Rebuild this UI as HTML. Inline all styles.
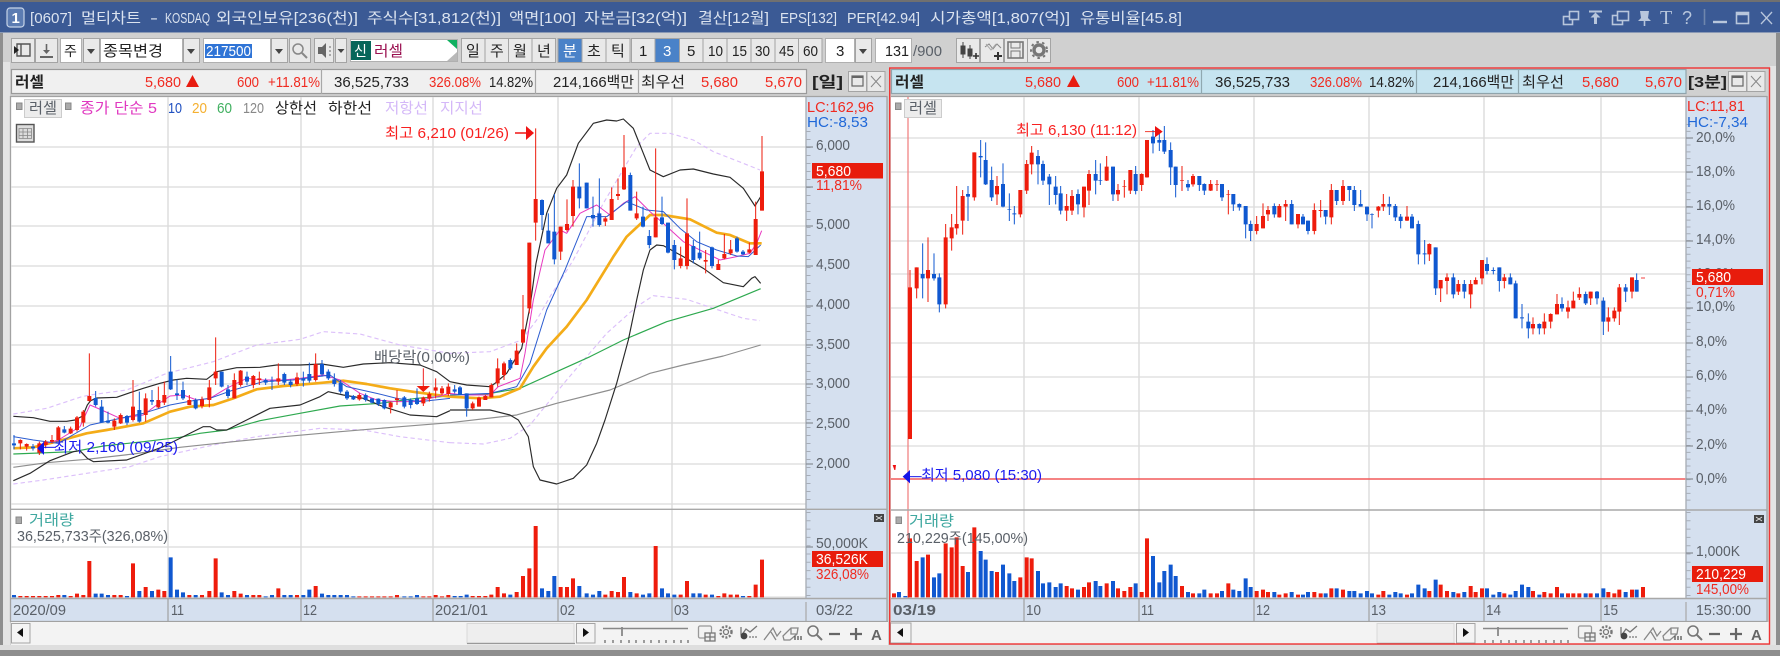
<!DOCTYPE html>
<html lang="ko"><head><meta charset="utf-8"><title>멀티차트</title>
<style>
html,body{margin:0;padding:0;background:#d0d0d0;width:1780px;height:656px;overflow:hidden}
svg{display:block}
text{font-family:"Liberation Sans","Noto Sans CJK KR",sans-serif;font-size:15px;fill:#333}
.t text{fill:#dbe3ef;font-size:15px}
.r{fill:#f02a20}
.a{fill:#5a6068}
.w{fill:#fff}
.d{fill:#222}
.n{fill:#222}
.b{fill:#e9e9e9;stroke:#a4a4a4;stroke-width:1}
.wh{fill:#fff;stroke:#b0b0b0;stroke-width:1}
</style></head><body>
<svg xmlns="http://www.w3.org/2000/svg" width="1780" height="656" viewBox="0 0 1780 656">
<defs>
<g id="tools" fill="none" stroke="#777" stroke-width="1.3">
<rect x="698.5" y="626" width="13" height="12" rx="1.5" stroke="#999"/><rect x="705" y="633" width="10" height="8" fill="#eee"/><path d="M710 633v8M705 637h10"/>
<circle cx="726" cy="632" r="5.5" stroke-width="2.4" stroke-dasharray="2 1.6"/><circle cx="726" cy="632" r="2.5"/>
<path d="M741 636l5-7 4 3 7-6M741 627v8"/><circle cx="744" cy="636" r="3.4" fill="#444" stroke="none"/><path d="M749 637h9" stroke-dasharray="2 1"/>
<path d="M764 640l9-12 4 8 4-5M771 632l5 8" stroke="#888"/>
<path d="M783 636l8-8h7l-1 6-7 6h-6zM791 628v6h6" stroke="#888"/><path d="M795 640v-4M798 640v-4M801 640v-4" stroke="#555"/>
<circle cx="813" cy="631" r="5" stroke-width="1.6"/><path d="M817 635l5 5" stroke-width="2"/>
<path d="M829 634h11M850 634h12M856 628v12" stroke="#666" stroke-width="2.2"/>
</g>
</defs>
<rect width="1780" height="656" fill="#d0d0d0"/>
<!-- window frame -->
<rect x="0" y="0" width="1780" height="3" fill="#707070"/>
<rect x="0" y="32" width="3" height="624" fill="#8e8e8e"/>
<rect x="3" y="62" width="7" height="590" fill="#e4e4e4"/>
<rect x="1776" y="32" width="4" height="624" fill="#8e8e8e"/>
<rect x="1770" y="66" width="6" height="586" fill="#e4e4e4"/>
<rect x="0" y="645" width="1780" height="6" fill="#dedede"/>
<rect x="0" y="650" width="1780" height="6" fill="#8e8e8e"/>
<!-- title bar -->
<rect x="0" y="2" width="1780" height="30" fill="#3b5a95"/>
<rect x="7" y="8" width="17" height="19" rx="3" fill="#5c7cb2" stroke="#c6d4e8" stroke-width="1.2"/>
<text x="11.5" y="23" fill="#fff" style="fill:#fff;font-weight:bold;font-size:15px">1</text>
<g class="t">
<text x="30" y="23" textLength="42" lengthAdjust="spacingAndGlyphs">[0607]</text>
<text x="81" y="23" textLength="60" lengthAdjust="spacingAndGlyphs">멀티차트</text>
<text x="150" y="23" textLength="8" lengthAdjust="spacingAndGlyphs">-</text>
<text x="165" y="23" textLength="45" lengthAdjust="spacingAndGlyphs">KOSDAQ</text>
<text x="216" y="23" textLength="142" lengthAdjust="spacingAndGlyphs">외국인보유[236(천)]</text>
<text x="367" y="23" textLength="134" lengthAdjust="spacingAndGlyphs">주식수[31,812(천)]</text>
<text x="509" y="23" textLength="67" lengthAdjust="spacingAndGlyphs">액면[100]</text>
<text x="584" y="23" textLength="103" lengthAdjust="spacingAndGlyphs">자본금[32(억)]</text>
<text x="698" y="23" textLength="71" lengthAdjust="spacingAndGlyphs">결산[12월]</text>
<text x="780" y="23" textLength="57" lengthAdjust="spacingAndGlyphs">EPS[132]</text>
<text x="847" y="23" textLength="73" lengthAdjust="spacingAndGlyphs">PER[42.94]</text>
<text x="930" y="23" textLength="140" lengthAdjust="spacingAndGlyphs">시가총액[1,807(억)]</text>
<text x="1080" y="23" textLength="102" lengthAdjust="spacingAndGlyphs">유통비율[45.8]</text>
</g>
<g fill="none" stroke="#b8c6dc" stroke-width="1.6">
<rect x="1563.5" y="16.5" width="9" height="8"/><rect x="1569.5" y="11.5" width="9" height="8" fill="#3b5a95"/>
<path d="M1589 11.5h13" stroke-width="2"/><path d="M1595.5 24v-8" stroke-width="3"/><path d="M1590.5 17.5l5-5 5 5z" fill="#b8c6dc" stroke="none"/>
<rect x="1612.5" y="15.5" width="10" height="9"/><rect x="1617.5" y="11.5" width="11" height="9" fill="#3b5a95"/>
<path d="M1640 11h9l-1 7 3 3h-13l3-3z" fill="#b8c6dc" stroke="none"/><path d="M1644.5 21v5"/>
<path d="M1704.5 9v16" stroke="#6f86ad"/>
<path d="M1713 22h14" stroke-width="2.4"/>
<rect x="1736.5" y="12.5" width="12" height="11"/><path d="M1736 14h13" stroke-width="2.5"/>
<path d="M1761 12l11 12M1772 12l-11 12" stroke-width="1.3"/>
</g>
<text x="1660" y="24" style="font-family:'Liberation Serif',serif;font-size:20px;fill:#b8c6dc">T</text>
<text x="1682" y="24" style="font-size:18px;fill:#b8c6dc">?</text>

<!-- toolbar -->
<rect x="0" y="32" width="1780" height="1" fill="#8a99b5"/>
<g>
<rect class="b" x="11.5" y="38.5" width="23" height="24"/><rect class="b" x="35.5" y="38.5" width="22" height="24"/>
<path d="M17 44h13v12H17zM21 44v12" fill="none" stroke="#555" stroke-width="1.4"/><path d="M14 46l5 4-5 4z" fill="#222"/>
<path d="M46.5 44v8" stroke="#666" stroke-width="1.6"/><path d="M43 50h7l-3.5 4z" fill="#666"/><path d="M40 57h13" stroke="#666" stroke-width="2"/>
<rect class="wh" x="60.5" y="38.5" width="21" height="24"/><text x="64" y="56" class="d" style="font-size:14px">주</text>
<rect class="b" x="83.5" y="38.5" width="16" height="24"/><path d="M87 49h8l-4 5z" fill="#444"/>
<rect class="wh" x="100.5" y="38.5" width="82" height="24"/><text x="103" y="56" class="d" textLength="60" lengthAdjust="spacingAndGlyphs">종목변경</text>
<rect class="b" x="183.5" y="38.5" width="16" height="24"/><path d="M187 49h8l-4 5z" fill="#444"/>
<rect class="wh" x="203.5" y="38.5" width="67" height="24"/><rect x="205" y="44" width="47" height="14" fill="#2f74d6"/><text x="206" y="56" class="w" textLength="45" lengthAdjust="spacingAndGlyphs">217500</text>
<rect class="b" x="271.5" y="38.5" width="16" height="24"/><path d="M275 49h8l-4 5z" fill="#444"/>
<rect class="b" x="289.5" y="38.5" width="21" height="24"/><circle cx="298" cy="49" r="5" fill="none" stroke="#888" stroke-width="1.5"/><path d="M302 53l5 5" stroke="#888" stroke-width="2"/>
<rect class="b" x="314.5" y="38.5" width="19" height="24"/><path d="M318 47h4l4-4v15l-4-4h-4z" fill="#666"/><path d="M329 47h2M329 51h2M329 55h2" stroke="#666"/>
<rect class="b" x="335.5" y="38.5" width="11" height="24"/><path d="M337.5 49h7l-3.5 4z" fill="#444"/>
<rect class="wh" x="350.5" y="39.5" width="107" height="22"/><rect x="351" y="41" width="20" height="19" fill="#07665a"/><text x="354" y="56" class="w" style="font-size:14px">신</text>
<text x="374" y="56" style="fill:#9a1050" textLength="29" lengthAdjust="spacingAndGlyphs">러셀</text>
<path d="M447 40h10v9z" fill="#10b060"/><path d="M457 52v9h-10z" fill="#b8b8b8"/>
</g>
<g style="font-size:14px">
<rect class="b" x="461.5" y="38.5" width="23.5" height="24"/><rect class="b" x="485" y="38.5" width="23.5" height="24"/><rect class="b" x="508.5" y="38.5" width="23.5" height="24"/><rect class="b" x="532" y="38.5" width="23.5" height="24"/>
<rect x="558" y="38.5" width="24" height="24" fill="#4a82c8" stroke="#a4a4a4"/><rect class="b" x="582" y="38.5" width="24" height="24"/><rect class="b" x="606" y="38.5" width="24" height="24"/>
<rect class="b" x="631.5" y="38.5" width="23.5" height="24"/><rect x="655" y="38.5" width="24.5" height="24" fill="#4a82c8" stroke="#a4a4a4"/><rect class="b" x="679.5" y="38.5" width="23.5" height="24"/><rect class="b" x="703" y="38.5" width="24" height="24"/><rect class="b" x="727" y="38.5" width="24" height="24"/><rect class="b" x="751" y="38.5" width="24" height="24"/><rect class="b" x="775" y="38.5" width="23.5" height="24"/><rect class="b" x="798.5" y="38.5" width="23.5" height="24"/>
<text x="466" y="56" class="d" textLength="14">일</text><text x="490" y="56" class="d" textLength="14">주</text><text x="513" y="56" class="d" textLength="14">월</text><text x="537" y="56" class="d" textLength="14">년</text>
<text x="563" y="56" class="w" textLength="14">분</text><text x="587" y="56" class="d" textLength="14">초</text><text x="611" y="56" class="d" textLength="14">틱</text>
<text x="639" y="56" class="d">1</text><text x="663" y="56" class="w">3</text><text x="687" y="56" class="d">5</text>
<text x="708" y="56" class="d" textLength="15" lengthAdjust="spacingAndGlyphs">10</text><text x="732" y="56" class="d" textLength="15" lengthAdjust="spacingAndGlyphs">15</text><text x="755" y="56" class="d" textLength="15" lengthAdjust="spacingAndGlyphs">30</text><text x="779" y="56" class="d" textLength="15" lengthAdjust="spacingAndGlyphs">45</text><text x="803" y="56" class="d" textLength="15" lengthAdjust="spacingAndGlyphs">60</text>
<rect class="wh" x="825.5" y="38.5" width="29" height="24"/><text x="836" y="56" class="d">3</text>
<rect class="b" x="855.5" y="38.5" width="16" height="24"/><path d="M859 49h8l-4 5z" fill="#444"/>
<rect class="wh" x="875.5" y="38.5" width="36" height="24"/><text x="885" y="56" class="d" textLength="24" lengthAdjust="spacingAndGlyphs">131</text>
<text x="913" y="56" class="a" textLength="29" lengthAdjust="spacingAndGlyphs">/900</text>
<rect class="b" x="956.5" y="38.5" width="23" height="24"/><rect class="b" x="980.5" y="38.5" width="23" height="24"/><rect class="b" x="1004.5" y="38.5" width="23" height="24"/><rect class="b" x="1027.5" y="38.5" width="23" height="24"/>
<path d="M961 46h4v8h-4zM968 49h4v7h-4zM963 42v16M970 45v14" fill="#444" stroke="#444"/><path d="M973 56h6M976 53v6" stroke="#333" stroke-width="1.6"/>
<path d="M985 47l4-3 4 5 4-5 4 4" fill="none" stroke="#888"/><path d="M986 44l5 6 5-6" fill="none" stroke="#aaa"/><path d="M994 56h8M998 52v8" stroke="#333" stroke-width="2"/>
<rect x="1008" y="42" width="15" height="16" fill="none" stroke="#777" stroke-width="1.6"/><rect x="1011" y="42" width="9" height="6" fill="none" stroke="#777"/><rect x="1011" y="51" width="9" height="7" fill="none" stroke="#777"/>
<circle cx="1039" cy="50" r="5" fill="none" stroke="#777" stroke-width="3.4"/><circle cx="1039" cy="50" r="8" fill="none" stroke="#777" stroke-width="2" stroke-dasharray="2.5 3.3"/>
</g>

<!-- info bars -->
<rect x="11.5" y="69.5" width="795" height="24" fill="#f0f0f0" stroke="#9a9a9a" stroke-width="1.2"/>
<path d="M321.5 69v25M535.5 69v25M638.5 69v25" stroke="#a8a8a8" stroke-width="1.2"/>
<text x="15" y="87" class="d" style="font-weight:bold" textLength="29" lengthAdjust="spacingAndGlyphs">러셀</text>
<g>
<text x="145" y="87" class="r" textLength="36" lengthAdjust="spacingAndGlyphs">5,680</text><path d="M186 87l6.5-12 6.5 12z" fill="#e81c10"/>
<text x="237" y="87" class="r" textLength="22" lengthAdjust="spacingAndGlyphs">600</text><text x="268" y="87" class="r" textLength="52" lengthAdjust="spacingAndGlyphs">+11.81%</text>
<text x="334" y="87" class="n" textLength="75" lengthAdjust="spacingAndGlyphs">36,525,733</text>
<text x="429" y="87" class="r" textLength="52" lengthAdjust="spacingAndGlyphs">326.08%</text>
<text x="489" y="87" class="n" textLength="44" lengthAdjust="spacingAndGlyphs">14.82%</text>
<text x="553" y="87" class="n" textLength="81" lengthAdjust="spacingAndGlyphs">214,166백만</text>
<text x="641" y="87" class="n" textLength="44" lengthAdjust="spacingAndGlyphs">최우선</text>
<text x="701" y="87" class="r" textLength="37" lengthAdjust="spacingAndGlyphs">5,680</text>
<text x="765" y="87" class="r" textLength="37" lengthAdjust="spacingAndGlyphs">5,670</text>
</g>
<text x="812" y="87" class="d" style="font-weight:bold" textLength="31" lengthAdjust="spacingAndGlyphs">[일]</text>
<rect class="b" x="848.5" y="71.5" width="18" height="20"/><rect class="b" x="867" y="71.5" width="18" height="20"/>
<rect x="852" y="76" width="11" height="10" fill="none" stroke="#666" stroke-width="1.2"/><path d="M852 77h11" stroke="#666" stroke-width="2"/><path d="M871 76l10 11M881 76l-10 11" stroke="#888"/>

<rect x="891.5" y="69.5" width="794.5" height="24" fill="#c6e4f0" stroke="#90a4ac" stroke-width="1.2"/>
<path d="M1416.5 69v25M1518.5 69v25M1201.5 69v25" stroke="#90a8b0" stroke-width="1.2"/>
<text x="895" y="87" class="d" style="font-weight:bold" textLength="29" lengthAdjust="spacingAndGlyphs">러셀</text>
<text x="1025" y="87" class="r" textLength="36" lengthAdjust="spacingAndGlyphs">5,680</text><path d="M1067 87l6.5-12 6.5 12z" fill="#e81c10"/>
<text x="1117" y="87" class="r" textLength="22" lengthAdjust="spacingAndGlyphs">600</text><text x="1147" y="87" class="r" textLength="52" lengthAdjust="spacingAndGlyphs">+11.81%</text>
<text x="1215" y="87" class="n" textLength="75" lengthAdjust="spacingAndGlyphs">36,525,733</text>
<text x="1310" y="87" class="r" textLength="52" lengthAdjust="spacingAndGlyphs">326.08%</text>
<text x="1369" y="87" class="n" textLength="45" lengthAdjust="spacingAndGlyphs">14.82%</text>
<text x="1433" y="87" class="n" textLength="81" lengthAdjust="spacingAndGlyphs">214,166백만</text>
<text x="1522" y="87" class="n" textLength="42" lengthAdjust="spacingAndGlyphs">최우선</text>
<text x="1582" y="87" class="r" textLength="37" lengthAdjust="spacingAndGlyphs">5,680</text>
<text x="1645" y="87" class="r" textLength="37" lengthAdjust="spacingAndGlyphs">5,670</text>
<text x="1688" y="87" class="d" style="font-weight:bold" textLength="39" lengthAdjust="spacingAndGlyphs">[3분]</text>
<rect class="b" x="1728.5" y="71.5" width="18" height="20"/><rect class="b" x="1747" y="71.5" width="18" height="20"/>
<rect x="1732" y="76" width="11" height="10" fill="none" stroke="#666" stroke-width="1.2"/><path d="M1732 77h11" stroke="#666" stroke-width="2"/><path d="M1751 76l10 11M1761 76l-10 11" stroke="#888"/>

<!-- LEFT CHART -->
<rect x="11" y="97" width="795" height="501" fill="#fff"/>
<rect x="806" y="97" width="81" height="501" fill="#d5e0ef"/>
<rect x="11" y="598.5" width="876" height="22.5" fill="#d5e0ef"/>
<path d="M10.5 96v526M10.5 96.5H887.500M887 96v526M10 621.500H888" fill="none" stroke="#a2a2a2" stroke-width="1.3"/>
<path d="M11 147H806M11 187H806M11 226H806M11 266H806M11 306H806M11 345H806M11 384H806M11 423H806M11 464H806M11 504H806M11 547H806" stroke="#e0e0e0" stroke-width="1.4"/>
<path d="M168 97V598M301 97V598M433 97V598M558 97V598M672 97V598" stroke="#dcdcdc" stroke-width="1.4"/>
<path d="M11 597H806" stroke="#d8d8d8"/>
<path d="M11 509.300H887" stroke="#a8a8a8" stroke-width="1.4"/>
<path d="M11 598.500H887" stroke="#a8a8a8" stroke-width="1.4"/>
<path d="M806 97V598" stroke="#aab0b8" stroke-width="1.4"/>
<path d="M168 599V621M301 599V621M433 599V621M558 599V621M672 599V621" stroke="#a0a0a0" stroke-width="1.2"/>
<path d="M806 602V621" stroke="#a8a8a8" stroke-width="1.2"/>
<path d="M808.500 131V505" stroke="#a6adb8" stroke-width="4" stroke-dasharray="1 7"/>
<path d="M808.500 512V596" stroke="#a6adb8" stroke-width="4" stroke-dasharray="1 7.300"/>
<path d="M806 147h7M806 226h7M806 266h7M806 306h7M806 345h7M806 384h7M806 423h7M806 464h7M806 547h7M806 187h7" stroke="#8a8f98" stroke-width="1.2"/>
<text x="816" y="150" class="a" textLength="34" lengthAdjust="spacingAndGlyphs">6,000</text>
<text x="816" y="229" class="a" textLength="34" lengthAdjust="spacingAndGlyphs">5,000</text>
<text x="816" y="269" class="a" textLength="34" lengthAdjust="spacingAndGlyphs">4,500</text>
<text x="816" y="309" class="a" textLength="34" lengthAdjust="spacingAndGlyphs">4,000</text>
<text x="816" y="349" class="a" textLength="34" lengthAdjust="spacingAndGlyphs">3,500</text>
<text x="816" y="388" class="a" textLength="34" lengthAdjust="spacingAndGlyphs">3,000</text>
<text x="816" y="428" class="a" textLength="34" lengthAdjust="spacingAndGlyphs">2,500</text>
<text x="816" y="468" class="a" textLength="34" lengthAdjust="spacingAndGlyphs">2,000</text>
<text x="807" y="112" class="r" textLength="67" lengthAdjust="spacingAndGlyphs">LC:162,96</text>
<text x="807" y="127" style="fill:#2068d8" textLength="61" lengthAdjust="spacingAndGlyphs">HC:-8,53</text>
<rect x="812" y="163" width="71" height="15.500" fill="#e81c0c"/>
<text x="816" y="176" class="w" textLength="35" lengthAdjust="spacingAndGlyphs">5,680</text>
<text x="816" y="190" class="r" textLength="46" lengthAdjust="spacingAndGlyphs">11,81%</text>
<rect x="874" y="514" width="10" height="8" fill="#444"/><path d="M876 516l6 4M882 516l-6 4" stroke="#ddd"/>
<text x="816" y="548" class="a" textLength="52" lengthAdjust="spacingAndGlyphs">50,000K</text>
<rect x="812" y="551" width="71" height="16" fill="#e81c0c"/>
<text x="816" y="564" class="w" textLength="52" lengthAdjust="spacingAndGlyphs">36,526K</text>
<text x="816" y="579" class="r" textLength="53" lengthAdjust="spacingAndGlyphs">326,08%</text>

<!-- legend -->
<rect x="16.500" y="103" width="5.500" height="6.500" fill="#aaa" stroke="#888"/>
<rect x="24.500" y="99.500" width="37" height="18" fill="#ececec" stroke="#ccc"/>
<text x="29" y="113" class="a" textLength="28" lengthAdjust="spacingAndGlyphs">러셀</text>
<rect x="65.500" y="103" width="5.500" height="6.500" fill="#aaa" stroke="#888"/>
<text x="80" y="113" style="fill:#e038c0" textLength="77" lengthAdjust="spacingAndGlyphs">종가 단순 5</text>
<text x="168" y="113" style="fill:#2050c0" textLength="14" lengthAdjust="spacingAndGlyphs">10</text>
<text x="192" y="113" style="fill:#f5b030" textLength="15" lengthAdjust="spacingAndGlyphs">20</text>
<text x="217" y="113" style="fill:#40b060" textLength="15" lengthAdjust="spacingAndGlyphs">60</text>
<text x="243" y="113" style="fill:#888" textLength="21" lengthAdjust="spacingAndGlyphs">120</text>
<text x="275" y="113" class="d" textLength="42" lengthAdjust="spacingAndGlyphs">상한선</text>
<text x="328" y="113" class="d" textLength="44" lengthAdjust="spacingAndGlyphs">하한선</text>
<text x="385" y="113" style="fill:#d4b8f8" textLength="43" lengthAdjust="spacingAndGlyphs">저항선</text>
<text x="440" y="113" style="fill:#d4b8f8" textLength="43" lengthAdjust="spacingAndGlyphs">지지선</text>
<rect x="16.500" y="124.500" width="17.500" height="17.500" fill="#ddd" stroke="#555" stroke-width="1.400"/>
<path d="M19 128.500h12.500v10H19zM19 132h12.500M19 135.500h12.500M23 128.500v10M27.500 128.500v10" fill="none" stroke="#888" stroke-width=".8"/>
<text x="385" y="138" style="fill:#f82020" textLength="124" lengthAdjust="spacingAndGlyphs">최고 6,210 (01/26)</text>
<path d="M515 133h12" stroke="#f01414" stroke-width="1.500"/><path d="M526 126l8 7-8 7z" fill="#f01414"/>

<!-- left lines -->
<g transform="translate(0 330) scale(.33333)" fill="none" stroke-linejoin="round">
<path stroke="#dcc0fa" stroke-width="3.500" stroke-dasharray="13 9" d="M40 252L140 235L245 200L270 195L380 180L500 130L640 95L770 45L900 28L970 5L1080 12L1200 45L1350 70"/>
<path stroke="#dcc0fa" stroke-width="3.500" stroke-dasharray="13 9" d="M40 462L130 450L260 430L390 410L480 380L640 345L770 320L960 295L1090 300L1200 320L1350 338"/>
<path stroke="#8e8e8e" stroke-width="3.500" d="M40 412L140 398L260 388L400 372L540 352L700 335L850 320L1020 305L1200 290L1350 278"/>
<path stroke="#2ea94f" stroke-width="3.500" d="M40 372L220 365L310 348L430 335L540 322L600 310L680 300L780 272L900 250L1020 228L1140 220L1250 205L1350 198"/>
<path stroke="#2a2a2a" stroke-width="3.500" d="M40 259L100 263L150 274L200 274L225 270L248 258L262 225L272 212L290 204L350 202L390 188L430 175L480 160L520 150L560 145L620 148L650 125L710 113L780 112L830 105L900 105L965 102L1030 112L1090 102L1170 98L1260 105L1310 125L1350 155"/>
<path stroke="#2a2a2a" stroke-width="3.500" d="M40 452L90 430L150 392L220 365L240 362L262 385L280 395L380 390L430 372L490 350L550 320L610 290L630 290L650 300L680 300L740 270L810 235L900 225L960 200L985 185L1030 195L1090 205L1150 230L1230 255L1310 260L1350 242"/>
<path stroke="#f4ac18" stroke-width="8" d="M40 355L100 352L180 332L260 310L320 300L430 280L510 245L570 230L640 225L700 205L770 178L850 168L950 160L1030 152L1100 162L1170 175L1250 187L1350 200"/>
<path stroke="#e838c0" stroke-width="3" d="M120 345L175 330L240 290L270 225L305 240L360 265L430 255L470 225L510 198L550 195L590 210L630 205L680 175L740 145L790 150L850 150L900 145L970 135L1020 150L1080 190L1130 210L1190 215L1250 215L1350 190"/>
<path stroke="#2c5cd0" stroke-width="3" d="M40 320L100 330L175 340L270 285L360 265L430 250L510 225L590 210L630 205L700 180L790 155L880 150L990 135L1040 170L1130 190L1190 205L1260 215L1350 205"/>
</g>
<g transform="translate(450 100) scale(.33333)" fill="none" stroke-linejoin="round">
<path stroke="#dcc0fa" stroke-width="3.500" stroke-dasharray="13 9" d="M0 760L120 755L215 720L260 660L300 590L370 480L460 310L560 140L600 100L660 100L730 120L790 155L880 190L930 210"/>
<path stroke="#dcc0fa" stroke-width="3.500" stroke-dasharray="13 9" d="M0 1028L100 1032L180 1015L240 975L350 840L470 700L560 620L610 587L710 598L790 625L880 655L930 662"/>
<path stroke="#8e8e8e" stroke-width="3.500" d="M0 968L200 945L320 910L480 870L600 820L700 795L820 768L932 735"/>
<path stroke="#2ea94f" stroke-width="3.500" d="M0 885L110 882L210 865L320 815L420 770L520 720L650 665L790 625L932 566"/>
<path stroke="#2a2a2a" stroke-width="3.500" d="M0 845L50 855L120 860L135 850L170 820L215 745L240 620L258 490L290 340L320 265L350 225L385 130L430 70L470 60L500 63L520 57L550 85L580 160L600 210L640 230L690 210L730 207L790 222L840 232L880 265L915 318L932 290"/>
<path stroke="#2a2a2a" stroke-width="3.500" d="M0 930L120 930L180 945L205 960L235 1010L250 1100L270 1140L320 1152L370 1135L410 1095L440 1030L465 960L500 850L535 720L560 600L580 510L600 450L620 435L640 437L700 470L760 505L820 548L880 560L905 535L915 530L932 550"/>
<path stroke="#f4ac18" stroke-width="8" d="M0 890L90 895L150 890L210 865L250 800L290 745L350 680L410 600L490 470L530 410L600 345L640 345L720 358L800 398L840 405L900 430L935 430"/>
<path stroke="#e838c0" stroke-width="3" d="M0 880L40 885L120 885L145 860L210 835L225 760L250 600L285 450L330 390L350 400L390 340L440 315L480 345L520 310L555 290L600 335L640 370L700 425L760 455L810 480L860 470L900 460L920 430L935 392"/>
<path stroke="#2c5cd0" stroke-width="3" d="M0 885L120 880L200 860L240 790L290 630L345 510L410 350L470 350L530 305L590 330L640 335L690 385L740 425L800 450L860 468L895 470L932 435"/>
</g>

<!-- left candles part 1 -->
<g transform="translate(0 330) scale(.33333)" fill="none">
<path stroke="#ee1c0c" stroke-width="3" d="M61 328V358M80 340V362M118 335V375M137 330V355M156 315V340M175 288V332M212 290V312M231 258V305M250 240V290M268 70V215M343 265V300M362 250V282M399 150V275M437 190V275M475 170V235M493 155V225M568 195V225M606 200V235M628 150V232M647 22V165M703 130V205M722 120V170M760 135V175M778 125V165M835 100V165M891 128V168M947 70V155M1078 190V212M1172 215V250M1191 180V225M1270 200V228M1288 185V215M1307 145V205M1326 168V195M1345 160V198"/>
<path stroke="#ee1c0c" stroke-width="12" d="M61 330V340M80 342V350M118 340V368M137 335V345M156 330V335M175 292V330M212 296V310M231 262V300M250 245V278M268 198V213M343 272V290M362 255V280M399 230V270M437 205V255M475 210V232M493 195V218M568 210V225M606 208V228M628 172V210M647 125V145M703 150V205M722 122V165M760 138V165M778 145V150M835 145V155M891 142V162M947 102V150M1078 195V208M1172 218V232M1191 205V210M1270 202V220M1288 192V205M1307 172V182M1326 175V190M1345 170V192"/>
<path stroke="#1058d0" stroke-width="3" d="M42 315V358M99 342V362M193 288V310M287 183V230M305 210V278M324 245V280M381 255V285M418 185V278M456 180V225M512 78V180M531 148V210M549 155V210M587 205V238M665 125V172M684 165V205M741 125V165M797 145V165M816 140V180M853 128V165M872 148V172M910 125V170M928 98V158M966 90V140M985 118V150M1003 130V170M1022 150V190M1041 180V210M1060 195V210M1097 190V215M1116 205V220M1135 205V228M1153 208V238M1213 198V235M1232 205V235M1251 175V225"/>
<path stroke="#1058d0" stroke-width="12" d="M42 340V346M99 350V355M193 298V308M287 204V225M305 230V278M324 272V278M381 258V278M418 240V275M456 210V215M512 125V178M531 190V195M549 180V205M587 210V235M665 125V170M684 178V198M741 140V155M797 150V158M816 152V155M853 132V158M872 155V165M910 145V152M928 132V152M966 102V133M985 125V145M1003 148V162M1022 158V185M1041 185V205M1060 198V208M1097 195V210M1116 205V218M1135 206V222M1153 210V235M1213 202V230M1232 210V225M1251 205V222"/>
<!-- volume part 1 -->
<path stroke="#ee1c0c" stroke-width="12" d="M61 798V802M80 798V802M99 798V802M118 798V802M137 798V802M156 798V802M175 795V802M212 798V802M231 791V802M250 795V802M268 693V802M343 795V802M362 795V802M399 700V802M437 771V802M475 779V802M493 783V802M568 795V802M606 795V802M628 783V802M647 685V802M703 783V802M722 791V802M760 795V802M778 795V802M835 775V802M891 795V802M947 768V802M1078 799V802M1097 799V802M1116 799V802M1135 799V802M1153 799V802M1172 799V802M1191 795V802M1270 799V802M1288 799V802M1307 795V802M1326 799V802M1345 795V802"/>
<path stroke="#1058d0" stroke-width="12" d="M42 795V802M193 795V802M287 791V802M305 791V802M324 795V802M381 798V802M418 783V802M456 783V802M512 682V802M531 779V802M549 787V802M587 795V802M665 787V802M684 795V802M741 795V802M797 799V802M816 795V802M853 795V802M872 795V802M910 795V802M928 779V802M966 791V802M985 795V802M1003 795V802M1022 795V802M1041 795V802M1060 799V802M1213 799V802M1232 799V802M1251 795V802"/>
</g>
<!-- left candles part 2 -->
<g transform="translate(450 100) scale(.33333)" fill="none">
<path stroke="#ee1c0c" stroke-width="3" d="M68 905V930M87 890V920M106 885V900M124 850V892M143 775V860M162 785V840M200 730V795M219 585V730M238 428V640M257 85V422M332 380V480M351 298V395M369 240V380M466 350V378M485 262V360M504 235V300M522 105V270M560 275V360M617 145V412M692 440V505M711 295V508M767 450V520M805 480V510M823 402V478M842 420V465M898 428V460M917 305V465M936 108V332"/>
<path stroke="#ee1c0c" stroke-width="12" d="M68 910V925M87 893V920M106 888V900M124 855V892M143 805V850M162 790V825M200 752V795M219 688V728M238 428V625M257 297V368M332 380V455M351 372V390M369 260V348M466 355V365M485 297V360M504 282V288M522 202V268M560 340V355M617 352V412M692 475V498M711 400V498M767 480V485M805 492V510M823 462V475M842 448V460M898 448V458M917 357V465M936 214V332"/>
<path stroke="#1058d0" stroke-width="3" d="M14 855V880M30 858V885M50 880V950M181 775V810M276 298V390M295 340V430M313 282V493M388 190V325M410 248V325M429 290V380M448 235V380M541 218V332M579 320V382M598 390V445M636 290V375M654 368V460M673 420V508M730 420V490M749 395V480M786 440V505M861 410V458M879 450V465"/>
<path stroke="#1058d0" stroke-width="12" d="M14 868V875M30 862V885M50 880V925M181 780V805M276 300V345M295 392V430M313 395V478M388 260V295M410 248V325M429 345V355M448 340V375M541 225V332M579 350V380M598 408V435M636 352V372M654 368V458M673 435V480M730 438V480M749 458V475M786 442V498M861 415V455M879 455V463"/>
</g>
<g transform="translate(450 420) scale(.33333)" fill="none">
<path stroke="#ee1c0c" stroke-width="12" d="M68 528V532M87 528V532M106 528V532M124 524V532M143 501V532M162 520V532M200 516V532M219 468V532M238 445V532M257 318V532M332 501V532M351 501V532M369 475V532M466 524V532M485 513V532M504 516V532M522 471V532M560 520V532M617 378V532M692 524V532M711 483V532M767 524V532M805 528V532M823 520V532M842 524V532M861 524V532M898 528V532M917 494V532M936 419V532"/>
<path stroke="#1058d0" stroke-width="12" d="M14 528V532M32 528V532M50 524V532M181 524V532M276 505V532M295 513V532M313 468V532M388 498V532M410 520V532M429 524V532M448 513V532M541 516V532M579 524V532M598 520V532M636 505V532M654 520V532M673 524V532M730 520V532M749 520V532M786 524V532M879 528V532"/>
</g>
<!-- left markers -->
<g transform="translate(0 330) scale(.33333)">
<path d="M1270 115V170" stroke="#ee2020" stroke-width="3"/><path d="M1250 168h40l-20 18z" fill="#ee1c0c"/>
<path d="M132 352H168" stroke="#1818f0" stroke-width="3"/><path d="M112 355l20-20v40z" fill="#1414e8"/>
</g>
<text x="54" y="452" style="fill:#1c1cf0" textLength="124" lengthAdjust="spacingAndGlyphs">최저 2,160 (09/25)</text>
<text x="374" y="362" class="a" textLength="96" lengthAdjust="spacingAndGlyphs">배당락(0,00%)</text>
<rect x="16" y="517" width="5.500" height="6.500" fill="#aaa" stroke="#888"/>
<text x="29" y="525" style="fill:#40a8a0;font-size:15px" textLength="45" lengthAdjust="spacingAndGlyphs">거래량</text>
<text x="17" y="541" class="a" textLength="151" lengthAdjust="spacingAndGlyphs">36,525,733주(326,08%)</text>
<!-- left x labels -->
<text x="13" y="615" class="a" textLength="53" lengthAdjust="spacingAndGlyphs">2020/09</text>
<text x="171" y="615" class="a" textLength="13" lengthAdjust="spacingAndGlyphs">11</text>
<text x="303" y="615" class="a" textLength="14" lengthAdjust="spacingAndGlyphs">12</text>
<text x="435" y="615" class="a" textLength="53" lengthAdjust="spacingAndGlyphs">2021/01</text>
<text x="560" y="615" class="a" textLength="15" lengthAdjust="spacingAndGlyphs">02</text>
<text x="674" y="615" class="a" textLength="15" lengthAdjust="spacingAndGlyphs">03</text>
<text x="816" y="615" class="a" textLength="37" lengthAdjust="spacingAndGlyphs">03/22</text>
<!-- left scroll -->
<rect x="11" y="622" width="877" height="23" fill="#f3f3f3"/>
<rect class="b" x="11.500" y="623.500" width="18.500" height="19.500" style="fill:#f4f4f4"/><path d="M23 628v9l-6-4.500z" fill="#111"/>
<rect x="467" y="623.500" width="107" height="19.500" fill="#eee" stroke="#d8d8d8"/><path d="M467 643.500h108" stroke="#999" stroke-width="1.200"/>
<rect class="b" x="576.500" y="623.500" width="18.500" height="19.500" style="fill:#f4f4f4"/><path d="M583 628v9l6-4.500z" fill="#111"/>
<path d="M603 628.500h85" stroke="#888" stroke-width="1.600"/><path d="M622 627v9" stroke="#888" stroke-width="1.800"/>
<path d="M605 640v3M613 640v3M621 640v3M629 640v3M636 640v3M644 640v3M651 640v3M659 640v3M666 640v3M674 640v3M681 640v3M688 640v3" stroke="#444"/>
<use href="#tools"/>
<text x="871" y="640" style="font-weight:bold;font-size:15px;fill:#666">A</text>

<!-- RIGHT CHART -->
<rect x="891" y="97" width="795" height="501" fill="#fff"/>
<rect x="1686" y="97" width="81" height="501" fill="#d5e0ef"/>
<rect x="891" y="598.500" width="876" height="22.500" fill="#d5e0ef"/>
<path d="M1767 96v526M891 96.500H1767M891 621.500H1767" fill="none" stroke="#a2a2a2" stroke-width="1.300"/>
<path d="M891 138H1686M891 172H1686M891 207H1686M891 241H1686M891 274H1686M891 308H1686M891 343H1686M891 377H1686M891 411H1686M891 446H1686M891 553H1686" stroke="#e2e2e2" stroke-width="1.400"/>
<path d="M1024 97V598M1139 97V598M1254 97V598M1369 97V598M1484 97V598M1601 97V598" stroke="#dcdcdc" stroke-width="1.400"/>
<path d="M891 479H1686" stroke="#f25a5a" stroke-width="1.400"/>
<path d="M908 97V598" stroke="#f08484" stroke-width="1.300"/>
<path d="M891 510H1767M891 598.500H1767" stroke="#a8a8a8" stroke-width="1.400"/>
<path d="M1686 97V598" stroke="#aab0b8" stroke-width="1.400"/>
<path d="M1024 599V621M1139 599V621M1254 599V621M1369 599V621M1484 599V621M1601 599V621" stroke="#a0a0a0" stroke-width="1.200"/>
<path d="M1686 602V621" stroke="#a8a8a8" stroke-width="1.200"/>
<path d="M1688.500 124V505" stroke="#a6adb8" stroke-width="4" stroke-dasharray="1 5.830"/>
<path d="M1688.500 512V596" stroke="#a6adb8" stroke-width="4" stroke-dasharray="1 7.300"/>
<path d="M1686 138h7M1686 172h7M1686 207h7M1686 241h7M1686 308h7M1686 343h7M1686 377h7M1686 411h7M1686 446h7M1686 479h7M1686 553h7" stroke="#8a8f98" stroke-width="1.200"/>
<text x="1687" y="111" class="r" textLength="58" lengthAdjust="spacingAndGlyphs">LC:11,81</text>
<text x="1687" y="127" style="fill:#2068d8" textLength="61" lengthAdjust="spacingAndGlyphs">HC:-7,34</text>
<text x="1696" y="142" class="a" textLength="39" lengthAdjust="spacingAndGlyphs">20,0%</text>
<text x="1696" y="176" class="a" textLength="39" lengthAdjust="spacingAndGlyphs">18,0%</text>
<text x="1696" y="210" class="a" textLength="39" lengthAdjust="spacingAndGlyphs">16,0%</text>
<text x="1696" y="244" class="a" textLength="39" lengthAdjust="spacingAndGlyphs">14,0%</text>
<text x="1696" y="278" class="a" textLength="39" lengthAdjust="spacingAndGlyphs">12,0%</text>
<rect x="1692" y="269" width="71" height="16" fill="#e81c0c"/>
<text x="1696" y="282" class="w" textLength="35" lengthAdjust="spacingAndGlyphs">5,680</text>
<text x="1696" y="297" class="r" textLength="39" lengthAdjust="spacingAndGlyphs">0,71%</text>
<text x="1696" y="311" class="a" textLength="39" lengthAdjust="spacingAndGlyphs">10,0%</text>
<text x="1696" y="346" class="a" textLength="31" lengthAdjust="spacingAndGlyphs">8,0%</text>
<text x="1696" y="380" class="a" textLength="31" lengthAdjust="spacingAndGlyphs">6,0%</text>
<text x="1696" y="414" class="a" textLength="31" lengthAdjust="spacingAndGlyphs">4,0%</text>
<text x="1696" y="449" class="a" textLength="31" lengthAdjust="spacingAndGlyphs">2,0%</text>
<text x="1696" y="483" class="a" textLength="31" lengthAdjust="spacingAndGlyphs">0,0%</text>
<rect x="1754" y="515" width="10" height="8" fill="#444"/><path d="M1756 517l6 4M1762 517l-6 4" stroke="#ddd"/>
<text x="1696" y="556" class="a" textLength="44" lengthAdjust="spacingAndGlyphs">1,000K</text>
<rect x="1692" y="566" width="71" height="16" fill="#e81c0c"/>
<text x="1696" y="579" class="w" textLength="50" lengthAdjust="spacingAndGlyphs">210,229</text>
<text x="1696" y="594" class="r" textLength="53" lengthAdjust="spacingAndGlyphs">145,00%</text>

<rect x="895.500" y="103" width="5.500" height="6.500" fill="#aaa" stroke="#888"/>
<rect x="904.500" y="99.500" width="37" height="18" fill="#ececec" stroke="#ccc"/>
<text x="909" y="113" class="a" textLength="28" lengthAdjust="spacingAndGlyphs">러셀</text>
<text x="1016" y="135" style="fill:#f82020" textLength="121" lengthAdjust="spacingAndGlyphs">최고 6,130 (11:12)</text>

<g transform="translate(880 90) scale(.33333)" fill="none">
<path stroke="#ee1c0c" stroke-width="3" d="M90 540V600M110 532V625M144 442V636M197 402V655M215 372V482M230 288V434M248 300V434M283 187V332M351 258V345M421 300V382M440 210V312M455 168V253M560 312V393M576 300V375M612 290V382M627 240V345M680 198V273M714 282V333M733 270V323M751 240V312M785 250V303M801 150V263M906 228V303M939 252V290M992 270V303M1011 270V303M1045 300V373M1130 378V433M1149 340V415M1164 348V393M1198 342V383M1217 330V393M1254 372V415M1303 340V433M1322 330V382"/>
<path stroke="#ee1c0c" stroke-width="12" d="M90 592V1047M110 532V595M144 540V565M197 442V643M215 412V445M230 402V415M248 318V392M283 187V322M351 288V313M421 300V373M440 222V302M455 188V223M560 348V362M576 318V362M612 290V352M627 252V302M680 230V272M714 300V313M733 288V290M751 240V302M785 252V285M801 150V262M906 270V272M939 258V283M992 282V302M1011 282V284M1045 312V314M1130 402V423M1149 378V415M1164 360V373M1198 348V382M1217 342V350M1254 372V403M1303 360V423M1322 360V363"/>
<path stroke="#1058d0" stroke-width="3" d="M128 460V625M162 490V572M178 550V667M264 288V393M302 150V262M317 157V285M335 230V333M369 220V352M388 310V393M403 348V403M474 180V283M489 212V285M508 252V345M527 258V343M542 288V373M594 298V373M647 210V313M661 220V285M699 230V333M767 228V313M819 120V190M838 125V183M853 108V192M872 157V285M887 230V322M924 270V303M958 258V303M973 280V315M1026 282V333M1060 312V363M1078 340V362M1097 348V445M1112 392V453M1183 340V383M1235 330V403M1269 372V403M1284 392V433M1337 360V403"/>
<path stroke="#1058d0" stroke-width="12" d="M128 552V565M162 552V565M178 562V643M264 312V320M302 198V202M317 210V283M335 270V322M369 282V350M388 358V360M403 370V373M474 198V223M489 222V272M508 260V283M527 290V315M542 310V362M594 312V343M647 252V272M661 270V272M699 230V313M767 252V303M819 140V160M838 150V158M853 150V185M872 180V232M887 230V285M924 282V292M958 258V285M973 282V302M1026 282V322M1060 312V343M1078 342V352M1097 348V403M1112 402V423M1183 348V373M1235 342V403M1269 380V403M1284 392V423M1337 360V380"/>
<path stroke="#ee1c0c" stroke-width="2.500" d="M795 125h38"/><path d="M825 108l23 17-23 17z" fill="#ee1010"/>
</g>
<g transform="translate(1330 90) scale(.33333)" fill="none">
<path stroke="#ee1c0c" stroke-width="3" d="M4 282V403M39 270V345M145 348V382M160 312V363M231 348V393M298 460V513M332 570V636M351 550V613M385 570V615M422 570V655M437 562V583M456 510V583M523 552V595M609 682V733M643 670V733M662 670V715M681 612V673M714 632V685M730 605V655M748 592V630M782 605V645M835 652V725M853 652V695M868 582V705M906 562V625"/>
<path stroke="#ee1c0c" stroke-width="12" d="M4 300V382M39 288V333M145 350V362M160 342V350M231 380V392M298 462V493M332 570V595M351 562V573M385 582V605M422 582V613M437 570V583M456 510V565M523 562V573M609 702V715M643 695V715M662 672V695M681 642V673M714 652V665M730 632V655M748 612V623M782 605V625M835 682V695M853 662V685M868 592V665M906 562V605"/>
<path stroke="#f04040" stroke-width="3" d="M933 564H945"/>
<path stroke="#1058d0" stroke-width="3" d="M20 300V345M58 288V333M73 288V363M92 300V350M111 350V393M126 370V415M178 320V375M196 342V393M212 372V415M246 372V415M265 392V523M284 450V523M317 472V615M370 550V625M403 570V625M471 502V553M490 532V553M508 532V605M541 550V583M557 572V685M576 642V715M595 670V745M628 700V733M696 622V665M767 605V645M801 603V643M820 622V735M887 582V636M920 550V605"/>
<path stroke="#1058d0" stroke-width="12" d="M20 300V333M58 288V300M73 300V345M92 342V350M111 350V373M126 372V374M178 342V350M196 348V382M212 380V393M246 380V415M265 402V493M284 490V493M317 472V595M370 562V613M403 582V605M471 522V543M490 540V543M508 532V573M541 562V583M557 580V685M576 682V685M595 695V715M628 702V715M696 642V655M767 612V640M801 605V625M820 632V695M887 592V605M920 570V605"/>
</g>
<!-- right volume -->
<g transform="translate(880 420) scale(.33333)" fill="none">
<path stroke="#ee1c0c" stroke-width="12" d="M42 520V532M90 355V532M110 423V532M144 404V532M197 370V532M215 382V532M230 352V532M248 438V532M283 322V532M351 456V532M421 472V532M440 412V532M455 415V532M560 498V532M576 505V532M612 501V532M627 487V532M680 490V532M714 505V532M733 513V532M751 501V532M785 516V532M801 355V532M906 498V532M939 520V532M992 520V532M1011 520V532M1045 490V532M1130 513V532M1149 509V532M1164 516V532M1198 524V532M1217 520V532M1254 524V532M1303 516V532M1322 520V532"/>
<path stroke="#1058d0" stroke-width="12" d="M57 516V532M76 528V532M128 412V532M162 472V532M178 460V532M264 456V532M302 393V532M317 419V532M335 453V532M369 434V532M388 460V532M403 483V532M474 453V532M489 490V532M508 487V532M527 501V532M542 490V532M594 509V532M647 483V532M661 498V532M699 483V532M767 490V532M819 408V532M838 487V532M853 453V532M872 434V532M887 468V532M924 516V532M958 520V532M973 509V532M1026 513V532M1060 509V532M1078 513V532M1097 475V532M1112 501V532M1183 516V532M1235 516V532M1269 524V532M1284 516V532M1337 520V532"/>
<path fill="#ee1010" d="M38 135h10l-2 15h-3z"/>
<path stroke="#1414e8" stroke-width="3" d="M90 170H125"/><path d="M68 170l22-20v40z" fill="#1414e8"/>
</g>
<g transform="translate(1330 420) scale(.33333)" fill="none">
<path stroke="#ee1c0c" stroke-width="12" d="M4 505V532M39 509V532M145 524V532M160 513V532M231 524V532M298 513V532M332 494V532M351 513V532M385 520V532M422 498V532M437 516V532M456 505V532M523 520V532M609 513V532M643 516V532M662 520V532M681 501V532M714 520V532M730 520V532M748 520V532M782 520V532M835 516V532M853 520V532M868 509V532M906 509V532M939 501V532"/>
<path stroke="#1058d0" stroke-width="12" d="M20 505V532M58 513V532M73 513V532M92 520V532M111 513V532M126 520V532M178 524V532M196 516V532M212 520V532M246 520V532M265 494V532M284 505V532M317 479V532M370 516V532M403 516V532M471 505V532M490 524V532M508 516V532M541 524V532M557 513V532M576 494V532M595 501V532M628 524V532M696 520V532M767 520V532M801 520V532M820 505V532M887 516V532M920 509V532"/>
</g>
<text x="921" y="480" style="fill:#1c1cf0" textLength="121" lengthAdjust="spacingAndGlyphs">최저 5,080 (15:30)</text>
<rect x="896" y="517" width="5.500" height="6.500" fill="#aaa" stroke="#888"/>
<text x="909" y="526" style="fill:#40a8a0;font-size:15px" textLength="45" lengthAdjust="spacingAndGlyphs">거래량</text>
<text x="897" y="543" class="a" textLength="131" lengthAdjust="spacingAndGlyphs">210,229주(145,00%)</text>
<!-- right x labels -->
<text x="893" y="615" class="a" style="font-weight:bold" textLength="43" lengthAdjust="spacingAndGlyphs">03/19</text>
<text x="1026" y="615" class="a" textLength="15" lengthAdjust="spacingAndGlyphs">10</text>
<text x="1141" y="615" class="a" textLength="13" lengthAdjust="spacingAndGlyphs">11</text>
<text x="1256" y="615" class="a" textLength="14" lengthAdjust="spacingAndGlyphs">12</text>
<text x="1371" y="615" class="a" textLength="15" lengthAdjust="spacingAndGlyphs">13</text>
<text x="1486" y="615" class="a" textLength="15" lengthAdjust="spacingAndGlyphs">14</text>
<text x="1603" y="615" class="a" textLength="15" lengthAdjust="spacingAndGlyphs">15</text>
<text x="1696" y="615" class="a" textLength="55" lengthAdjust="spacingAndGlyphs">15:30:00</text>
<!-- right scroll -->
<rect x="891" y="622" width="878" height="22" fill="#f3f3f3"/>
<rect class="b" x="890.500" y="623" width="20.500" height="20" style="fill:#f4f4f4"/><path d="M903 628v9l-6-4.500z" fill="#111"/>
<rect x="1377" y="623.500" width="77" height="19.500" fill="#eee" stroke="#d8d8d8"/><path d="M1377 643.500h78" stroke="#999" stroke-width="1.200"/>
<rect class="b" x="1456.500" y="623.500" width="18.500" height="19.500" style="fill:#f4f4f4"/><path d="M1463 628v9l6-4.500z" fill="#111"/>
<path d="M1483 628.500h85" stroke="#888" stroke-width="1.600"/><path d="M1498 627v9" stroke="#888" stroke-width="1.800"/>
<path d="M1485 640v3M1493 640v3M1501 640v3M1509 640v3M1516 640v3M1524 640v3M1531 640v3M1539 640v3M1546 640v3M1554 640v3M1561 640v3M1568 640v3" stroke="#444"/>
<use href="#tools" x="880"/>
<text x="1751" y="640" style="font-weight:bold;font-size:15px;fill:#666">A</text>
<!-- red active frame -->
<rect x="889.700" y="68" width="879.800" height="576" fill="none" stroke="#f03434" stroke-width="1.400"/>
</svg>
</body></html>
